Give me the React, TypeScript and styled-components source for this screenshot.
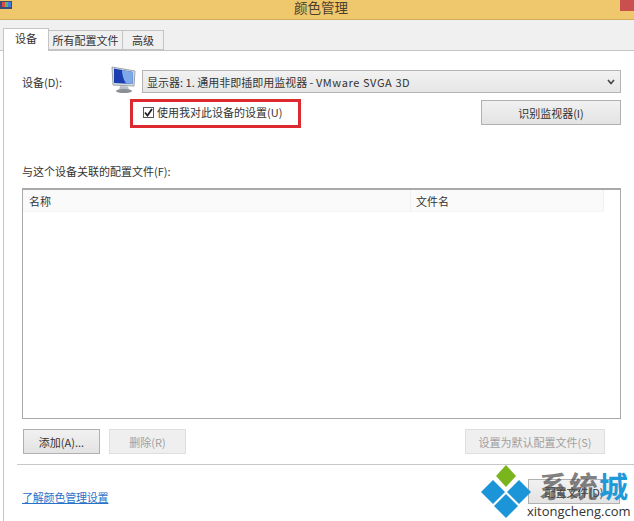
import styled, { createGlobalStyle } from 'styled-components';

const GlobalStyle = createGlobalStyle`
  html, body {
    margin: 0;
    padding: 0;
    background: #ffffff;
  }
  body {
    font-family: "Noto Sans CJK SC", "Liberation Sans", sans-serif;
    font-size: 11px;
    color: #333333;
  }
`;

const Window = styled.div`
  position: relative;
  width: 634px;
  height: 521px;
  overflow: hidden;
  display: flex;
  flex-direction: column;
  background: #ffffff;
`;

const TitleBar = styled.header`
  height: 19px;
  flex: none;
  display: flex;
  align-items: center;
  justify-content: space-between;
  background: #efc76c;
  border-bottom: 1px solid #d3ad5c;
`;

const AppIcon = styled.svg`
  width: 12px;
  height: 12px;
  margin-top: -6px;
`;

const Title = styled.h1`
  margin: -5px 0 0 10px;
  font-size: 13.5px;
  line-height: 16px;
  font-weight: 400;
  color: #4a4030;
`;

const CloseButton = styled.div`
  width: 14px;
  height: 11px;
  align-self: flex-start;
  background: #c9504f;
`;

const TabStrip = styled.nav`
  height: 31px;
  flex: none;
  box-sizing: border-box;
  display: flex;
  align-items: flex-end;
  padding-left: 3px;
  background: #f0f0f0;
  border-bottom: 1px solid #c4c4c4;
`;

const Tab = styled.div<{ $active?: boolean; $width: number }>`
  width: ${({ $width }) => $width}px;
  height: ${({ $active }) => ($active ? 23 : 20)}px;
  box-sizing: border-box;
  display: flex;
  align-items: center;
  justify-content: center;
  padding-bottom: ${({ $active }) => ($active ? 5 : 0)}px;
  margin-bottom: ${({ $active }) => ($active ? -1 : 0)}px;
  background: ${({ $active }) => ($active ? '#ffffff' : '#f0f0f0')};
  border: 1px solid #c4c4c4;
  border-bottom: ${({ $active }) => ($active ? 'none' : '1px solid #c4c4c4')};
  border-left-width: ${({ $active }) => ($active ? 1 : 0)}px;
  color: #333333;
`;

const Pane = styled.main`
  flex: 1;
  display: flex;
  flex-direction: column;
  margin-left: 3px;
  border-left: 1px solid #c4c4c4;
  padding-left: 18px;
  min-height: 0;
`;

const DeviceRow = styled.div`
  display: flex;
  align-items: flex-start;
  margin-top: 14px;
  height: 29px;
`;

const DeviceLabel = styled.label`
  width: 88px;
  margin-top: 9px;
  line-height: 16px;
`;

const MonitorIcon = styled.svg`
  width: 27px;
  height: 29px;
  flex: none;
  margin-right: 5px;
`;

const SelectBox = styled.div`
  width: 479px;
  height: 23px;
  margin-top: 5px;
  box-sizing: border-box;
  display: flex;
  align-items: center;
  justify-content: space-between;
  padding: 0 5px 0 4px;
  background: linear-gradient(#f2f2f2, #e6e6e6);
  border: 1px solid #b4b4b4;
  color: #333333;
`;

const LatinName = styled.span`
  letter-spacing: 0.6px;
`;

const Chevron = styled.svg`
  width: 8px;
  height: 6px;
`;

const OptionRow = styled.div`
  display: flex;
  align-items: flex-start;
  justify-content: space-between;
  width: 599px;
  margin-top: 6px;
  padding-left: 108px;
  box-sizing: border-box;
`;

const Highlight = styled.div`
  width: 171px;
  height: 29px;
  margin-top: -1px;
  box-sizing: border-box;
  display: flex;
  align-items: center;
  padding: 0 0 3px 10px;
  gap: 3px;
  border: 3px solid #dd2a30;
`;

const CheckBox = styled.span`
  width: 11px;
  height: 11px;
  box-sizing: border-box;
  display: flex;
  align-items: center;
  justify-content: center;
  background: #ffffff;
  border: 1px solid #555555;
`;

const Button = styled.button<{ $width: number; $disabled?: boolean }>`
  width: ${({ $width }) => $width}px;
  height: 25px;
  flex: none;
  padding: 0;
  box-sizing: border-box;
  font: inherit;
  color: ${({ $disabled }) => ($disabled ? '#a0a0a0' : '#333333')};
  background: ${({ $disabled }) =>
    $disabled ? '#efefef' : 'linear-gradient(#f1f1f1, #e3e3e3)'};
  border: 1px solid ${({ $disabled }) => ($disabled ? '#dedede' : '#b0b0b0')};
`;

const ProfilesLabel = styled.div`
  margin-top: 35px;
  line-height: 16px;
`;

const ProfileTable = styled.section`
  width: 599px;
  height: 231px;
  margin-top: 9px;
  box-sizing: border-box;
  flex: none;
  background: #ffffff;
  border: 1px solid #a9a9a9;
  border-top-width: 2px;
`;

const TableHead = styled.div`
  height: 21px;
  width: 581px;
  display: grid;
  grid-template-columns: 388px 193px;
  background: #fafafa;
  border-bottom: 1px solid #f5f5f5;
`;

const HeadCell = styled.div<{ $divided?: boolean }>`
  display: flex;
  align-items: center;
  padding-left: ${({ $divided }) => ($divided ? 5 : 6)}px;
  border-right: 1px solid #f0f0f0;
`;

const ActionRow = styled.div`
  display: flex;
  gap: 9px;
  margin-top: 10px;
  padding-left: 1px;
  width: 583px;
  box-sizing: border-box;
`;

const Spacer = styled.div`
  flex: 1;
`;

const Divider = styled.hr`
  margin: 10px 0 0 -5px;
  height: 0;
  border: none;
  border-top: 1px solid #c8c8c8;
`;

const FooterRow = styled.footer`
  display: flex;
  align-items: flex-start;
  justify-content: space-between;
  width: 598px;
  margin-top: 14px;
`;

const HelpLink = styled.a`
  margin-top: 10px;
  line-height: 16px;
  letter-spacing: -0.2px;
  color: #2a72c8;
  text-decoration: underline;
`;

const Watermark = styled.div`
  position: absolute;
  left: 479px;
  top: 464px;
  width: 155px;
  height: 57px;
`;

const WatermarkLogo = styled.svg`
  position: absolute;
  left: 0;
  top: 0;
  width: 54px;
  height: 57px;
`;

const BrandName = styled.div`
  position: absolute;
  left: 60px;
  top: 4px;
  font-size: 29px;
  line-height: 34px;
  font-weight: 700;
  letter-spacing: 1px;
  white-space: nowrap;
  color: rgba(80, 80, 80, 0.72);
`;

const BrandAccent = styled.span`
  color: #1f9ad8;
`;

const BrandSite = styled.div`
  position: absolute;
  left: 48px;
  top: 38px;
  font-family: "Open Sans", "Liberation Sans", sans-serif;
  font-size: 13px;
  line-height: 18px;
  white-space: nowrap;
  color: #333333;
`;

export default function App() {
  return (
    <Window>
      <GlobalStyle />
      <TitleBar>
        <AppIcon viewBox="0 0 12 12">
          <rect x="0" y="0" width="12" height="8" fill="#3c4a78" />
          <rect x="2" y="1" width="3" height="5" fill="#e04848" />
          <rect x="5" y="1" width="3" height="5" fill="#48c070" />
          <rect x="8" y="1" width="3" height="5" fill="#4878e0" />
        </AppIcon>
        <Title>颜色管理</Title>
        <CloseButton />
      </TitleBar>
      <TabStrip>
        <Tab $active $width={46}>设备</Tab>
        <Tab $width={74}>所有配置文件</Tab>
        <Tab $width={41}>高级</Tab>
      </TabStrip>
      <Pane>
        <DeviceRow>
          <DeviceLabel>设备(D):</DeviceLabel>
          <MonitorIcon viewBox="0 0 27 29">
            <path d="M2 2 L25 6 L24 21 L3 20 Z" fill="#d8dde2" stroke="#9aa2aa" strokeWidth="1" />
            <path d="M4 3.5 L23 7 L22.5 19 L4 18 Z" fill="#1b3fb0" />
            <path d="M12 5 L23 7 L22.5 19 L16 18.6 Q12 12 12 5 Z" fill="#7fa8e8" />
            <path d="M10 21 L18 21.5 L19 25 L9 25 Z" fill="#b8bec4" />
            <ellipse cx="14" cy="26" rx="8" ry="2" fill="#8a9096" />
          </MonitorIcon>
          <SelectBox>
            <span>显示器: 1. 通用非即插即用监视器 - <LatinName>VMware SVGA 3D</LatinName></span>
            <Chevron viewBox="0 0 8 6">
              <path d="M1 1 L4 4.5 L7 1" fill="none" stroke="#444444" strokeWidth="1.6" />
            </Chevron>
          </SelectBox>
        </DeviceRow>
        <OptionRow>
          <Highlight>
            <CheckBox>
              <svg width="9" height="9" viewBox="0 0 9 9">
                <path d="M1 4.5 L3.5 7.5 L8 1" fill="none" stroke="#222222" strokeWidth="1.8" />
              </svg>
            </CheckBox>
            <span>使用我对此设备的设置(U)</span>
          </Highlight>
          <Button $width={140}>识别监视器(I)</Button>
        </OptionRow>
        <ProfilesLabel>与这个设备关联的配置文件(F):</ProfilesLabel>
        <ProfileTable>
          <TableHead>
            <HeadCell>名称</HeadCell>
            <HeadCell $divided>文件名</HeadCell>
          </TableHead>
        </ProfileTable>
        <ActionRow>
          <Button $width={77}>添加(A)...</Button>
          <Button $width={77} $disabled>删除(R)</Button>
          <Spacer />
          <Button $width={140} $disabled>设置为默认配置文件(S)</Button>
        </ActionRow>
        <Divider />
        <FooterRow>
          <HelpLink>了解颜色管理设置</HelpLink>
          <Button $width={92}>配置文件(D)</Button>
        </FooterRow>
      </Pane>
      <Watermark>
        <WatermarkLogo viewBox="0 0 54 57">
          <path d="M27 1 L37 12 L27 23 L17 12 Z" fill="#7ab51d" />
          <path d="M14 16 L26 28 L14 40 L2 28 Z" fill="#1b95d8" />
          <path d="M40 16 L52 28 L40 40 L28 28 Z" fill="#1b95d8" />
          <path d="M27 30 L39 42 L27 54 L15 42 Z" fill="#1b95d8" />
        </WatermarkLogo>
        <BrandName>系统<BrandAccent>城</BrandAccent></BrandName>
        <BrandSite>xitongcheng.com</BrandSite>
      </Watermark>
    </Window>
  );
}
